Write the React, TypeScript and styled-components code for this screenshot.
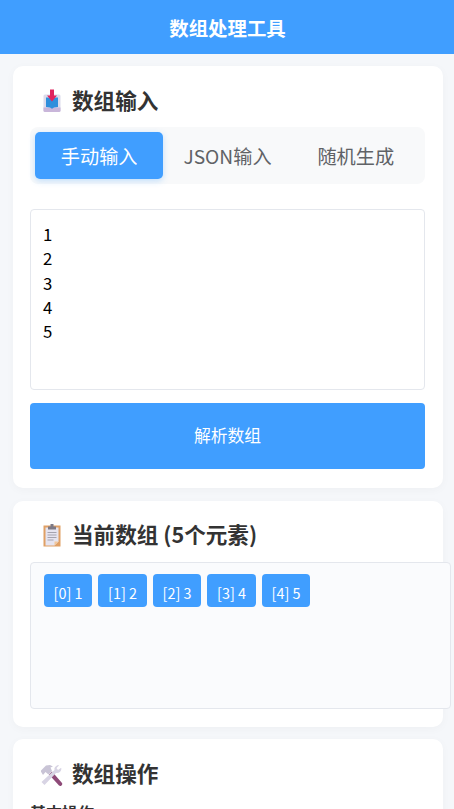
import React, { useState } from 'react';
import styled, { createGlobalStyle } from 'styled-components';

const GlobalStyle = createGlobalStyle`
  html, body {
    margin: 0;
    padding: 0;
    background: #f5f7fa;
  }

  * {
    box-sizing: border-box;
  }
`;

const InboxIcon = () => (
  <svg width="22" height="24" viewBox="0 -0.5 22 24">
    <rect x="2.500" y="5" width="17" height="17.500" rx="1.500" fill="#dcdcec" />
    <path d="M2.500 18h17v3a1.500 1.500 0 0 1-1.500 1.500H4A1.500 1.500 0 0 1 2.500 21z" fill="#c9b6da" />
    <path d="M5 8h12v9.500l-4 .5-2 1.200L9 18l-4-.5z" fill="#2f8fdc" />
    <path d="M9 0h4v6h3l-5 6-5-6h3z" fill="#e0245e" />
  </svg>
);

const ClipboardIcon = () => (
  <svg width="22" height="24" viewBox="0 1 22 24">
    <rect x="2.500" y="2.500" width="17" height="21" fill="#e0a065" />
    <path d="M4.500 4.500h13v14l-4 4h-9z" fill="#e6e4f0" />
    <path d="M17.500 18.500l-4 4v-4z" fill="#f2c79c" />
    <path d="M7 3.500h8v3H7zM9.500 1h3v3h-3z" fill="#7d7a86" />
    <path d="M6.500 9h9v1h-9zM6.500 11.500h9v1h-9zM6.500 14h9v1h-9zM6.500 16.500h6v1h-6z" fill="#a5a3af" />
  </svg>
);

const ToolsIcon = () => (
  <svg width="24" height="24" viewBox="1.500 -1.500 24 24">
    <path d="M9.500 11l3-3 10 11.500a2 2 0 0 1-3 2.500z" fill="#8e4a78" />
    <path d="M2 18.500 15 6.500c-.5-2 .5-4 3.500-5l1 .5-2.500 2.500 1.500 2 2.800-2 .7.500c-.3 3.500-3 5-5.500 4.500L5 21.500z" fill="#d8d4e4" />
    <path d="M1 7.500 6.500 2l4-.5 3 1.500-2.500 1 1.500 3.500-3.500 3.500-3-2.500-2.500 3z" fill="#c9c4d6" />
  </svg>
);

const SAMPLE = [1, 2, 3, 4, 5];

const App = () => {
  const [tab, setTab] = useState(0);
  const [text, setText] = useState(SAMPLE.join('\n'));

  return (
    <Page>
      <GlobalStyle />
      <Header>数组处理工具</Header>

      <Card>
        <CardTitle>
          <TitleIcon><InboxIcon /></TitleIcon>
          数组输入
        </CardTitle>
        <Tabs>
          {['手动输入', 'JSON输入', '随机生成'].map((label, i) => (
            <Tab key={label} $active={tab === i} onClick={() => setTab(i)}>
              {label}
            </Tab>
          ))}
        </Tabs>
        <TextArea value={text} onChange={(e) => setText(e.target.value)} />
        <ParseButton>解析数组</ParseButton>
      </Card>

      <Card>
        <CardTitle>
          <TitleIcon><ClipboardIcon /></TitleIcon>
          当前数组 (5个元素)
        </CardTitle>
        <ArrayBox>
          {SAMPLE.map((value, i) => (
            <Chip key={value}>[{i}] {value}</Chip>
          ))}
        </ArrayBox>
      </Card>

      <Card>
        <CardTitle>
          <TitleIcon><ToolsIcon /></TitleIcon>
          数组操作
        </CardTitle>
        <SectionLabel>基本操作</SectionLabel>
      </Card>
    </Page>
  );
};

export default App;

const Page = styled.div`
  height: 100vh;
  overflow: hidden;
  font-family: 'Noto Sans CJK SC', 'Noto Sans', sans-serif;
  background: #f5f7fa;
`;

const Header = styled.header`
  height: 54px;
  display: flex;
  align-items: center;
  justify-content: center;
  padding-left: 1px;
  background: #409eff;
  color: #fff;
  font-size: 19.400px;
  font-weight: 700;
`;

const Card = styled.section`
  width: 430px;
  margin: 12px 0 12.800px 13px;
  padding: 17px 18px 18.700px 17px;
  background: #fff;
  border-radius: 10px;
  box-shadow: 0 2px 10px rgba(0, 0, 0, 0.03);
`;

const CardTitle = styled.h2`
  display: flex;
  align-items: center;
  height: 32px;
  margin: 0 0 12px;
  color: #333;
  font-size: 21.600px;
  font-weight: 700;
`;

const TitleIcon = styled.span`
  display: flex;
  align-self: flex-start;
  flex: none;
  width: 42px;
  margin-top: 6px;
  padding-left: 10.500px;

  svg {
    display: block;
  }
`;

const Tabs = styled.div`
  display: flex;
  height: 57px;
  margin-bottom: 25px;
  padding: 5px;
  background: #f8f9fa;
  border-radius: 8px;
`;

const Tab = styled.button<{ $active: boolean }>`
  flex: 1;
  padding: 0;
  border: none;
  border-radius: 5px;
  background: ${(p) => (p.$active ? '#409eff' : 'transparent')};
  color: ${(p) => (p.$active ? '#fff' : '#606266')};
  box-shadow: ${(p) => (p.$active ? '0 2px 6px rgba(64, 158, 255, 0.3)' : 'none')};
  font-family: inherit;
  font-size: 19.200px;
  cursor: pointer;
`;

const TextArea = styled.textarea`
  display: block;
  width: 100%;
  height: 181px;
  margin-bottom: 13.200px;
  padding: 12px;
  border: 1px solid #e4e7ed;
  border-radius: 4px;
  color: #000;
  font-family: inherit;
  font-size: 16.800px;
  line-height: 24.300px;
  resize: none;
  outline: none;
`;

const ParseButton = styled.button`
  display: block;
  width: 100%;
  height: 66px;
  padding: 0 0 2px;
  border: none;
  border-radius: 4px;
  background: #409eff;
  color: #fff;
  font-family: inherit;
  font-size: 16.800px;
  cursor: pointer;
`;

const ArrayBox = styled.div`
  display: flex;
  align-items: flex-start;
  flex-wrap: wrap;
  gap: 6px;
  width: 421px;
  height: 147px;
  margin-bottom: -0.800px;
  padding: 11.500px 12.800px;
  background: #fafbfd;
  border: 1px solid #e4e7ed;
  border-radius: 4px;
`;

const Chip = styled.div`
  display: flex;
  align-items: center;
  justify-content: center;
  width: 48.500px;
  height: 33px;
  padding-top: 3px;
  border-radius: 4px;
  background: #409eff;
  color: #fff;
  font-size: 14.400px;
`;

const SectionLabel = styled.h3`
  margin: 3px 0 0;
  color: #333;
  font-size: 16px;
  font-weight: 700;
`;
